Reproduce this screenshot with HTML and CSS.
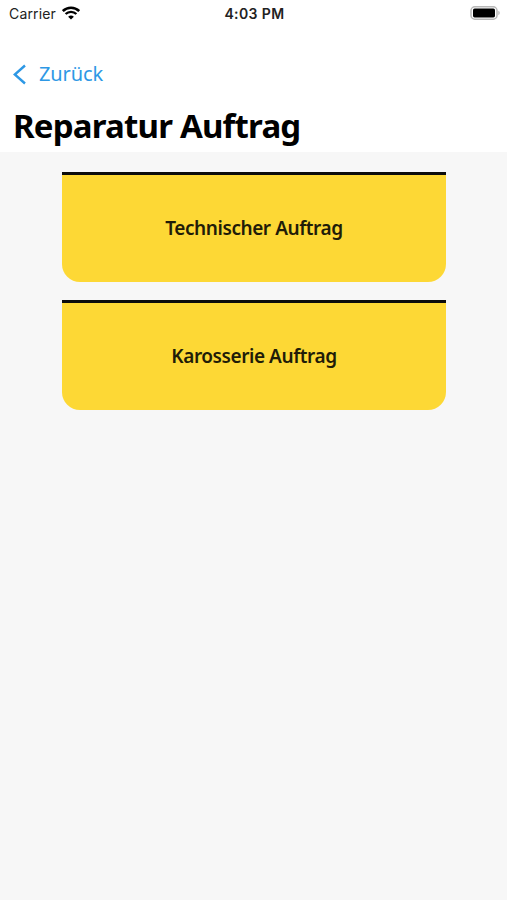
FILE: index.html
```html
<!DOCTYPE html>
<html lang="de">
<head>
  <meta charset="UTF-8" />
  <meta name="viewport" content="width=device-width, initial-scale=1.0" />
  <title>Reparatur Auftrag</title>
  <link rel="stylesheet" href="styles.css">
</head>
<body>

  <!-- Status bar -->
  <div class="status-bar">
    <div class="carrier">
      <span>Carrier</span>
      <svg width="18" height="14" viewBox="0 0 18 14">
        <path d="M0.8 5 A11.8 11.8 0 0 1 17.2 5" fill="none" stroke="#000" stroke-width="2.6" />
        <path d="M3.6 8 A7.8 7.8 0 0 1 14.4 8" fill="none" stroke="#000" stroke-width="2.4" />
        <path d="M9 13.6 L6.1 10.7 A4.3 4.3 0 0 1 11.9 10.7 Z" fill="#000" />
      </svg>
    </div>
    <span class="time">4:03 PM</span>
    <svg class="battery" width="30" height="14" viewBox="0 0 30 14">
      <rect x="1" y="0.8" width="26" height="12.4" rx="3.8" fill="#fff" stroke="#b8b8b8" stroke-width="1.5" />
      <rect x="3" y="2.6" width="22" height="8.8" rx="1.6" fill="#000" />
      <path d="M28.3 4.8 A2.4 2.4 0 0 1 28.3 9.2 Z" fill="#b8b8b8" />
    </svg>
  </div>

  <!-- Navigation -->
  <header class="header">
    <a class="back" href="#">
      <svg width="14" height="22" viewBox="0 0 14 22">
        <path d="M12 1.5 L1.8 10.5 L12 19.5" fill="none" stroke="#2d98e5" stroke-width="2.4" />
      </svg>
      <span>Zurück</span>
    </a>
    <h1>Reparatur Auftrag</h1>
  </header>

  <!-- Order types -->
  <main class="orders">
    <button class="order" type="button">Technischer Auftrag</button>
    <button class="order" type="button">Karosserie Auftrag</button>
  </main>

</body>
</html>
```
FILE: styles.css
```css
* {
  box-sizing: border-box;
}

body {
  margin: 0;
  min-height: 900px;
  display: flex;
  flex-direction: column;
  background-color: #f7f7f7;
  font-family: "Noto Sans", sans-serif;
}

.status-bar {
  display: grid;
  grid-template-columns: 1fr auto 1fr;
  align-items: center;
  height: 28px;
  padding: 0 7px 2px 9px;
  background-color: #fff;
  font-family: Inter, sans-serif;
  font-size: 14px;
  color: #222;
}

.carrier {
  display: flex;
  align-items: center;
  gap: 6px;
  letter-spacing: 0.15px;
}

.time {
  font-weight: 600;
  letter-spacing: 0.4px;
}

.battery {
  justify-self: end;
}

.header {
  height: 124px;
  padding: 34px 13px 0;
  background-color: #fff;
}

.back {
  display: flex;
  align-items: center;
  gap: 12px;
  height: 25px;
  color: #2d98e5;
  font-size: 20px;
  letter-spacing: -0.1px;
  text-decoration: none;
}

.back span {
  padding-bottom: 2px;
}

h1 {
  margin: 14px 0 0;
  font-size: 33px;
  font-weight: 700;
  line-height: 50px;
  letter-spacing: -0.8px;
  white-space: nowrap;
}

.orders {
  flex: 1;
  display: flex;
  flex-direction: column;
  gap: 18px;
  padding: 20px 61px 0 62px;
}

.order {
  height: 110px;
  padding: 0 0 2px;
  border: none;
  border-top: 3px solid #0c0c0c;
  border-radius: 0 0 18px 18px;
  background-color: #fdd835;
  color: #211c08;
  font-family: inherit;
  font-size: 19px;
  font-weight: 600;
  letter-spacing: -0.43px;
}
```
